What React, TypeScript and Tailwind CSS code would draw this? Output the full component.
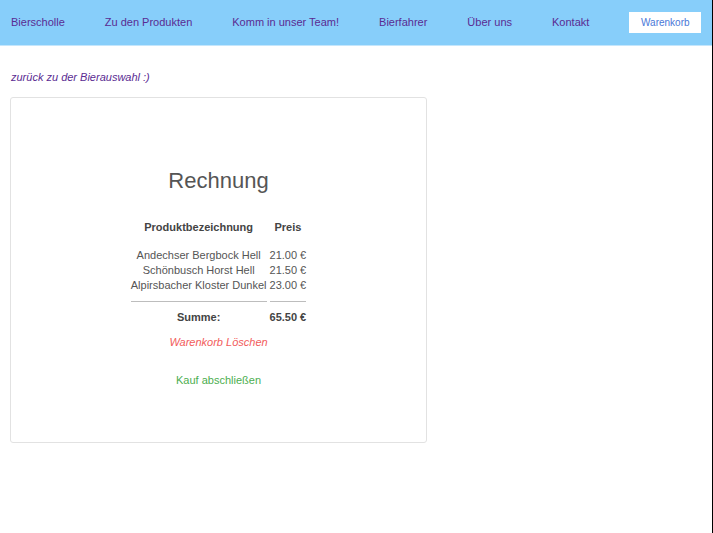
import React from "react";

const items = [
  { name: "Andechser Bergbock Hell", price: "21.00 €" },
  { name: "Schönbusch Horst Hell", price: "21.50 €" },
  { name: "Alpirsbacher Kloster Dunkel", price: "23.00 €" },
];

export default function App() {
  return (
    <div
      className="min-h-screen w-full bg-white border-r border-black"
      style={{ fontFamily: '"Liberation Sans", Arial, sans-serif' }}
    >
      <nav className="h-[46px] bg-[#87cefa] border-b border-[#c4e6fc] flex items-center pl-[11px] gap-10 text-[11px] whitespace-nowrap text-[#5a2b92]">
        <a>Bierscholle</a>
        <a>Zu den Produkten</a>
        <a>Komm in unser Team!</a>
        <a>Bierfahrer</a>
        <a>Über uns</a>
        <a>Kontakt</a>
        <a className="bg-white w-[72px] h-[21px] flex items-center justify-center text-[10px] text-[#4a78d8]">
          Warenkorb
        </a>
      </nav>

      <div className="pl-[10px] pt-[24px]">
        <div className="pl-[1px] italic text-[11px] leading-[15px] text-[#5a2b92]">
          zurück zu der Bierauswahl :)
        </div>

        <div className="mt-[12px] w-[417px] border border-[#e2e2e2] rounded-[3px] flex flex-col items-center pt-[70px] pb-[54px]">
          <div className="text-[22px] leading-[26px] text-[#555]">Rechnung</div>

          <div className="mt-[26px] grid grid-cols-[auto_auto] gap-x-[3px] text-[11px] leading-[15px] text-[#555] text-center">
            <div className="font-bold text-[#444]">Produktbezeichnung</div>
            <div className="font-bold text-[#444]">Preis</div>
            <div className="mt-[13px]">{items[0].name}</div>
            <div className="mt-[13px]">{items[0].price}</div>
            <div>{items[1].name}</div>
            <div>{items[1].price}</div>
            <div>{items[2].name}</div>
            <div>{items[2].price}</div>
            <div className="mt-[8px] border-t border-[#bdbdbd]"></div>
            <div className="mt-[8px] border-t border-[#bdbdbd]"></div>
            <div className="mt-[8px] font-bold text-[#444]">Summe:</div>
            <div className="mt-[8px] font-bold text-[#444]">65.50 €</div>
          </div>

          <div className="mt-[10px] italic text-[11px] leading-[15px] text-[#f25c5c]">
            Warenkorb Löschen
          </div>
          <div className="mt-[23px] text-[11px] leading-[15px] text-[#4cae4f]">
            Kauf abschließen
          </div>
        </div>
      </div>
    </div>
  );
}
